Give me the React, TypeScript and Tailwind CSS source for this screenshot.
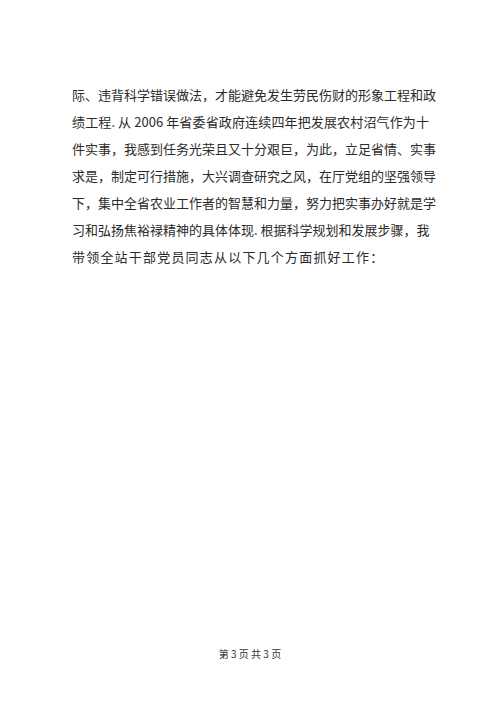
const LINES = [
  "际、违背科学错误做法，才能避免发生劳民伤财的形象工程和政",
  "绩工程. 从 2006 年省委省政府连续四年把发展农村沼气作为十",
  "件实事，我感到任务光荣且又十分艰巨，为此，立足省情、实事",
  "求是，制定可行措施，大兴调查研究之风，在厅党组的坚强领导",
  "下，集中全省农业工作者的智慧和力量，努力把实事办好就是学",
  "习和弘扬焦裕禄精神的具体体现. 根据科学规划和发展步骤，我",
];

export default function App() {
  return (
    <div
      className="relative w-[500px] h-[707px] bg-white text-[#2b2b2b]"
      style={{ fontFamily: '"Noto Sans CJK SC", "Liberation Serif", serif' }}
    >
      <div className="pt-[81px] pl-[72px] w-[429px] text-[13px] leading-[27px]">
        {LINES.map((l) => (
          <div key={l} className="text-justify [text-align-last:justify] whitespace-nowrap">
            {l}
          </div>
        ))}
        <div className="tracking-[1.2px]">带领全站干部党员同志从以下几个方面抓好工作：</div>
      </div>
      <div className="absolute top-[646px] left-0 right-0 text-center text-[10px] text-[#333]">
        第 3 页 共 3 页
      </div>
    </div>
  );
}
